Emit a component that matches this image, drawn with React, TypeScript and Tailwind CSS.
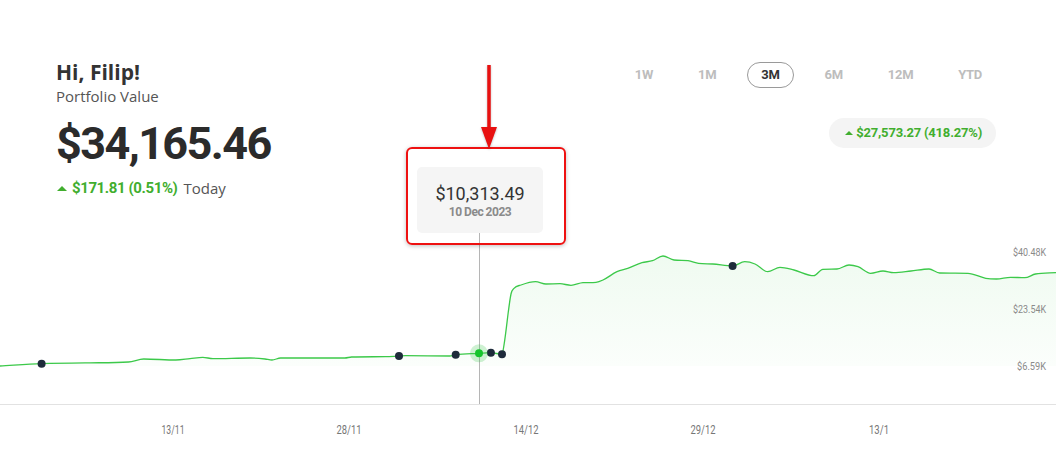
import React from 'react';

const DIN = "font-['Roboto',sans-serif]";
const OPEN = "font-['Open_Sans',sans-serif]";

type Pt = [number, number];

// page-coordinate samples of the portfolio line
const points: Pt[] = [
  [0, 366], [41.6, 363.7], [90, 362.8], [128.5, 362], [143.7, 359], [175.8, 360], [190, 358.6],
  [202.8, 357.3], [213, 358.7], [250, 358], [265, 359], [272, 360], [280.6, 358], [344.8, 358],
  [351.6, 357], [385.4, 356.7], [399, 356], [405.7, 355.7], [449.6, 356], [455.7, 354.7],
  [479, 353.3], [490.9, 352.7], [502, 354.3], [504, 345], [511, 294], [514, 288.3], [521, 285],
  [535.5, 281.7], [546, 284], [560, 283.7], [571, 285.3], [583, 282.7], [596, 282.3], [603, 280],
  [617, 271.7], [627.7, 268.3], [642, 262.7], [652.5, 260.7], [663, 256], [674, 260], [688, 260.7],
  [698.6, 263.3], [712.8, 264], [732.6, 266], [744.7, 261.7], [755, 264], [767.7, 271.7], [780, 267.3],
  [794, 270], [813.8, 275.7], [822.7, 269.3], [837, 269], [849, 265], [858, 266.7], [870.6, 273.3],
  [883, 271], [893.6, 272.7], [911, 271], [929, 269], [939.7, 273], [968, 273.3], [985.8, 278.3],
  [996.5, 279], [1010.6, 277.3], [1024.8, 277.7], [1035.5, 274], [1056, 272.7],
];

function monotonePath(pts: Pt[]) {
  const n = pts.length;
  const d: number[] = [];
  for (let i = 0; i < n - 1; i++) d.push((pts[i + 1][1] - pts[i][1]) / (pts[i + 1][0] - pts[i][0]));
  const m: number[] = new Array(n).fill(0);
  m[0] = d[0];
  m[n - 1] = d[n - 2];
  for (let i = 1; i < n - 1; i++) m[i] = d[i - 1] * d[i] <= 0 ? 0 : (d[i - 1] + d[i]) / 2;
  for (let i = 0; i < n - 1; i++) {
    if (d[i] === 0) { m[i] = 0; m[i + 1] = 0; continue; }
    const a = m[i] / d[i], b = m[i + 1] / d[i], s = a * a + b * b;
    if (s > 9) { const t = 3 / Math.sqrt(s); m[i] = t * a * d[i]; m[i + 1] = t * b * d[i]; }
  }
  let p = `M${pts[0][0]},${pts[0][1]}`;
  for (let i = 0; i < n - 1; i++) {
    const [x0, y0] = pts[i], [x1, y1] = pts[i + 1], h = x1 - x0;
    p += ` C${x0 + h / 3},${y0 + (m[i] * h) / 3} ${x1 - h / 3},${y1 - (m[i + 1] * h) / 3} ${x1},${y1}`;
  }
  return p;
}

const dots: Pt[] = [[41.6, 363.7], [399, 356], [455.7, 354.7], [490.9, 352.7], [502, 354.3], [732.6, 266]];
// label, centre x, rendered width (condensed like the original face)
const xLabels: [string, number, number][] = [
  ['13/11', 173, 23], ['28/11', 349, 25], ['14/12', 526, 25], ['29/12', 703, 25], ['13/1', 879, 20],
];
const yLabels: [string, number, number][] = [['$40.48K', 252, 33], ['$23.54K', 309, 33], ['$6.59K', 366, 29]];
const periods = ['1W', '1M', '3M', '6M', '12M', 'YTD'];

function Chart() {
  const line = monotonePath(points);
  const area = `${line} L1056,366 L0,366 Z`;
  return (
    <svg className="block" width={1056} height={219} viewBox="0 230 1056 219">
      <defs>
        <linearGradient id="fill" x1="0" y1="0" x2="0" y2="1">
          <stop offset="0" stopColor="#3cc94a" stopOpacity="0.08" />
          <stop offset="1" stopColor="#3cc94a" stopOpacity="0.02" />
        </linearGradient>
      </defs>
      <path d={area} fill="url(#fill)" />
      <line x1={0} y1={404.5} x2={1056} y2={404.5} stroke="#e2e2e2" strokeWidth={1} />
      <line x1={479.5} y1={233} x2={479.5} y2={404} stroke="#b5b5b5" strokeWidth={1} />
      <path d={line} fill="none" stroke="#3cc94a" strokeWidth={1.3} strokeLinejoin="round" />
      {dots.map(([x, y], i) => (
        <circle key={i} cx={x} cy={y} r={4} fill="#1e2b3b" />
      ))}
      <circle cx={479} cy={353.3} r={9} fill="#3cc94a" fillOpacity={0.25} />
      <circle cx={479} cy={353.3} r={4} fill="#16c42c" />
      {yLabels.map(([t, y, w]) => (
        <text key={t} x={1046 - w} y={y + 4} fontSize={11} fill="#8a8a8a" textLength={w}
          lengthAdjust="spacingAndGlyphs" fontFamily="Roboto, sans-serif">{t}</text>
      ))}
      {xLabels.map(([t, x, w]) => (
        <text key={t} x={x - w / 2} y={434} fontSize={12} fill="#777" textLength={w}
          lengthAdjust="spacingAndGlyphs" fontFamily="Roboto, sans-serif">{t}</text>
      ))}
    </svg>
  );
}

export default function App() {
  return (
    <div className="relative w-[1056px] h-[449px] overflow-hidden bg-white">
      {/* Header */}
      <div className="flex justify-between h-[230px] pl-[56px] pr-[60px]">
        <div className="pt-[58px]">
          <h1 className={`${OPEN} text-[21px] leading-[28px] font-bold text-[#333]`}>Hi, Filip!</h1>
          <p className={`${OPEN} text-[15px] leading-[20px] text-[#555]`}>Portfolio Value</p>
          <div className={`${DIN} mt-[14px] text-[45px] leading-[48px] font-bold tracking-[-1.6px] text-[#2b2b2b]`}>$34,165.46</div>
          <div className="mt-[9px] flex items-center">
            <span className="w-0 h-0 border-l-[5px] border-r-[5px] border-b-[5px] border-l-transparent border-r-transparent border-b-[#41ae2e] mr-[5px] ml-[1px]" />
            <span className={`${DIN} text-[15px] font-bold tracking-[-0.4px] text-[#41ae2e]`}>$171.81 (0.51%)</span>
            <span className={`${OPEN} ml-[6px] text-[15px] text-[#555]`}>Today</span>
          </div>
        </div>
        <div className="pt-[62px] flex flex-col items-end">
          <div className="flex gap-[17px]">
            {periods.map(p => (
              <button
                key={p}
                className={`${DIN} h-[26px] px-[13px] rounded-full text-[13px] font-bold tracking-[-0.3px] border ${
                  p === '3M' ? 'border-[#9a9a9a] text-[#333]' : 'border-transparent text-[#bdbdbd]'
                }`}
              >
                {p}
              </button>
            ))}
          </div>
          <div className="mt-[30px] h-[30px] pl-[16px] pr-[14px] rounded-full bg-[#f4f4f4] flex items-center">
            <span className="w-0 h-0 border-l-[4px] border-r-[4px] border-b-[4px] border-l-transparent border-r-transparent border-b-[#41ae2e] mr-[3px]" />
            <span className={`${DIN} text-[13px] font-bold tracking-[-0.2px] text-[#41ae2e]`}>$27,573.27 (418.27%)</span>
          </div>
        </div>
      </div>

      <Chart />

      {/* Tooltip highlighted */}
      <div className="absolute left-[406px] top-[147px] w-[160px] h-[98px] rounded-[6px] border-2 border-[#ee1111] shadow-[0_1px_4px_rgba(0,0,0,0.25)] pt-[18px] pl-[9px]">
        <div className="w-[126px] h-[66px] rounded-[5px] bg-[#f5f5f5] flex flex-col items-center justify-center">
          <div className={`${DIN} text-[18px] leading-[22px] text-[#333] mt-[2px]`}>$10,313.49</div>
          <div className={`${DIN} text-[12px] leading-[15px] font-bold tracking-[-0.5px] text-[#8a8a8a]`}>10 Dec 2023</div>
        </div>
      </div>

      {/* Arrow */}
      <svg className="absolute left-[479px] top-[62px] drop-shadow-[0_1px_1px_rgba(0,0,0,0.25)]" width={20} height={90} viewBox="0 0 20 90">
        <line x1={10} y1={3} x2={10} y2={68} stroke="#e81010" strokeWidth={3.5} />
        <polygon points="2,65 18,65 10,87" fill="#e81010" />
      </svg>
    </div>
  );
}
